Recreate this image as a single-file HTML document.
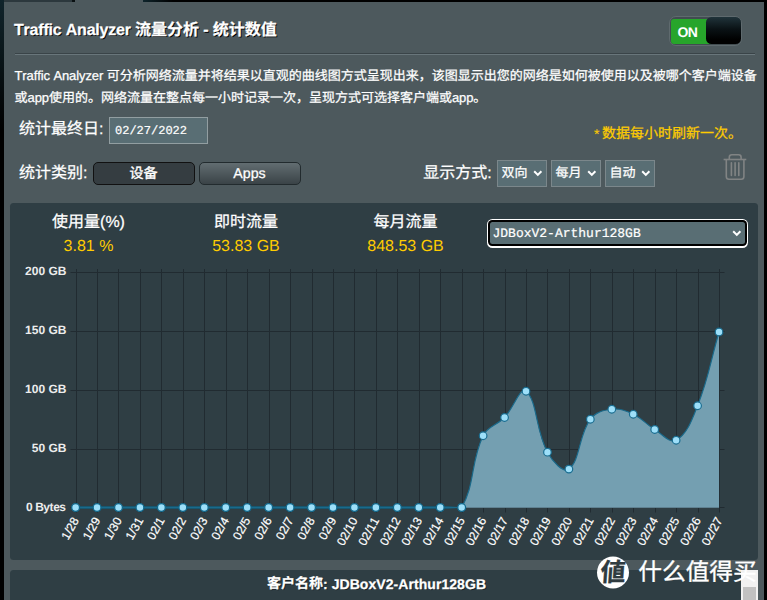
<!DOCTYPE html>
<html lang="zh-CN"><head><meta charset="utf-8"><title>Traffic Analyzer</title>
<style>
html,body,p,header,section{margin:0;padding:0}
html{width:767px;height:600px;overflow:hidden}
body{width:767px;height:600px;overflow:hidden;position:relative;background:#4d595d;font-family:"Liberation Sans",sans-serif;font-kerning:none;text-rendering:geometricPrecision}
.b{position:absolute;display:block}
.t{position:absolute;white-space:pre;}
.c{position:absolute;white-space:nowrap;color:#fff;height:1.2em;line-height:1.2em;z-index:2;font-family:"Liberation Sans","Noto Sans CJK SC",sans-serif;-webkit-text-stroke:0.25px #fff}
svg text{font-family:"Liberation Sans",sans-serif}
#ov,#ch{position:absolute;left:0;top:0;pointer-events:none}
</style></head><body>
<div class="frame">
<div class="b" style="left:0px;top:0px;width:4px;height:600px;background:linear-gradient(#10242b,#0a171b 50px,#000 130px)"></div>
<div class="b" style="left:764px;top:0px;width:3px;height:600px;background:#000"></div>
<div class="b" style="left:4px;top:0px;width:68px;height:1.5px;background:#2c383d"></div>
<div class="b" style="left:72px;top:0px;width:3px;height:1.5px;background:#0a1012"></div>
<div class="b" style="left:143px;top:0px;width:624px;height:1.8px;background:linear-gradient(90deg,#0e242b,#000 30px)"></div>
</div>
<header class="formfonttitle">
<span class="t" style="left:14px;top:21.82px;font-size:16px;line-height:18.38px;color:#fff;font-family:'Liberation Sans',sans-serif;font-weight:bold;letter-spacing:-0.2px;text-shadow:1px 1px 0 #000;-webkit-text-stroke:0.25px #fff;">Traffic Analyzer </span>
<span class="c" style="left:135.08px;top:20.86px;font-size:16px;width:66px;font-weight:bold;text-shadow:1px 1px 0 #000">流量分析</span>
<span class="t" style="left:199.08px;top:21.82px;font-size:16px;line-height:18.38px;color:#fff;font-family:'Liberation Sans',sans-serif;font-weight:bold;letter-spacing:-0.2px;text-shadow:1px 1px 0 #000;-webkit-text-stroke:0.25px #fff;"> - </span>
<span class="c" style="left:212.7px;top:20.86px;font-size:16px;width:66px;font-weight:bold;text-shadow:1px 1px 0 #000">统计数值</span>
<div class="b" style="left:15px;top:53px;width:740px;height:1px;background:#3a4448"></div>
<div class="b" style="left:15px;top:54px;width:740px;height:1px;background:#69767b"></div>
</header>
<p class="formfontdesc">
<span class="t" style="left:14.5px;top:68.53px;font-size:13px;line-height:14.94px;color:#fff;font-family:'Liberation Sans',sans-serif;letter-spacing:-0.1px;-webkit-text-stroke:0.25px #fff;">Traffic Analyzer </span>
<span class="c" style="left:106.71px;top:67.7px;font-size:13px;width:652px">可分析网络流量并将结果以直观的曲线图方式呈现出来，该图显示出您的网络是如何被使用以及被哪个客户端设备</span>
<span class="c" style="left:14.5px;top:89.7px;font-size:13px;width:15px">或</span>
<span class="t" style="left:27.5px;top:90.53px;font-size:13px;line-height:14.94px;color:#fff;font-family:'Liberation Sans',sans-serif;letter-spacing:-0.1px;-webkit-text-stroke:0.25px #fff;">app</span>
<span class="c" style="left:48.89px;top:89.7px;font-size:13px;width:405px">使用的。网络流量在整点每一小时记录一次，呈现方式可选择客户端或</span>
<span class="t" style="left:451.89px;top:90.53px;font-size:13px;line-height:14.94px;color:#fff;font-family:'Liberation Sans',sans-serif;letter-spacing:-0.1px;-webkit-text-stroke:0.25px #fff;">app</span>
<span class="c" style="left:473.28px;top:89.7px;font-size:13px;width:15px">。</span>
</p>
<div class="row-date">
<span class="c" style="left:19px;top:119.86px;font-size:16px;width:82px">统计最终日</span>
<span class="t" style="left:99px;top:120.82px;font-size:16px;line-height:18.38px;color:#fff;font-family:'Liberation Sans',sans-serif;-webkit-text-stroke:0.25px #fff;">:</span>
<div class="b" style="left:109px;top:116.5px;width:99px;height:27px;box-sizing:border-box;border:1px solid #929ea1;background:#596e74"></div>
<span class="t" style="left:115px;top:124.68px;font-size:12px;line-height:13.79px;color:#fff;font-family:'Liberation Mono',monospace;-webkit-text-stroke:0.2px #fff;">02/27/2022</span>
<span class="t" style="left:594px;top:125.93px;font-size:14px;line-height:16.09px;color:#ffcc00;font-family:'Liberation Sans',sans-serif;-webkit-text-stroke:0.1px #ffcc00;">*</span>
<span class="c" style="left:602.1px;top:124.75px;font-size:14px;width:142px;color:#ffcc00;-webkit-text-stroke:0.25px #ffcc00">数据每小时刷新一次。</span>
</div>
<div class="row-filter">
<span class="c" style="left:19px;top:164.16px;font-size:16px;width:66px">统计类别</span>
<span class="t" style="left:83px;top:165.12px;font-size:16px;line-height:18.38px;color:#fff;font-family:'Liberation Sans',sans-serif;-webkit-text-stroke:0.25px #fff;">:</span>
<div class="b" style="left:93px;top:162px;width:101.5px;height:22.5px;box-sizing:border-box;border:1px solid #111;border-radius:5px;background:#353d41"></div>
<span class="c" style="left:129.5px;top:165.05px;font-size:14px;width:30px;-webkit-text-stroke:0.4px #fff">设备</span>
<div class="b" style="left:199px;top:162px;width:101.5px;height:22.5px;box-sizing:border-box;border:1px solid #222b2e;border-radius:5px;background:linear-gradient(#626d71,#3a4347)"></div>
<span class="t" style="left:233.32px;top:165.7px;font-size:14.2px;line-height:16.32px;color:#fff;font-family:'Liberation Sans',sans-serif;-webkit-text-stroke:0.25px #fff;">Apps</span>
<span class="c" style="left:423.25px;top:164.16px;font-size:16px;width:66px">显示方式</span>
<span class="t" style="left:487.25px;top:165.12px;font-size:16px;line-height:18.38px;color:#fff;font-family:'Liberation Sans',sans-serif;-webkit-text-stroke:0.25px #fff;">:</span>
<div class="b" style="left:497px;top:160px;width:49.75px;height:26.75px;box-sizing:border-box;border:1px solid #7b878b;background:#596e74"></div>
<span class="c" style="left:501.5px;top:164.9px;font-size:13px;width:28px">双向</span>
<svg class="b" style="left:532.5px;top:170px" width="10" height="7" viewBox="0 0 10 7"><path d="M1.2 1.2 L4.8 4.9 L8.4 1.2" fill="none" stroke="#fff" stroke-width="2"/></svg>
<div class="b" style="left:551px;top:160px;width:49.75px;height:26.75px;box-sizing:border-box;border:1px solid #7b878b;background:#596e74"></div>
<span class="c" style="left:555.5px;top:164.9px;font-size:13px;width:28px">每月</span>
<svg class="b" style="left:586.5px;top:170px" width="10" height="7" viewBox="0 0 10 7"><path d="M1.2 1.2 L4.8 4.9 L8.4 1.2" fill="none" stroke="#fff" stroke-width="2"/></svg>
<div class="b" style="left:605px;top:160px;width:49.75px;height:26.75px;box-sizing:border-box;border:1px solid #7b878b;background:#596e74"></div>
<span class="c" style="left:609.5px;top:164.9px;font-size:13px;width:28px">自动</span>
<svg class="b" style="left:640.5px;top:170px" width="10" height="7" viewBox="0 0 10 7"><path d="M1.2 1.2 L4.8 4.9 L8.4 1.2" fill="none" stroke="#fff" stroke-width="2"/></svg>
<svg class="b" style="left:716px;top:148px" width="40" height="38" viewBox="716 148 40 38"><g fill="none" stroke="#818484" stroke-width="1.6"><path d="M723.6 159.5 H746.3"/><path d="M729.3 159.5 V157.2 Q729.3 154.7 731.8 154.7 H738.6 Q741.1 154.7 741.1 157.2 V159.5"/><path d="M726.3 159.5 V176.5 Q726.3 179.2 729 179.2 H741.2 Q743.9 179.2 743.9 176.5 V159.5"/><path stroke-linecap="round" d="M731.4 162.8 V175.4 M735.1 162.8 V175.4 M738.8 162.8 V175.4"/></g></svg>
</div>
<div class="iphone-switch">
<div class="b" style="left:669px;top:15.5px;width:72.5px;height:30.5px;box-sizing:border-box;border:1px solid #5f6a6e;border-radius:7px;background:#414c50"></div>
<div class="b" style="left:671px;top:18.5px;width:40px;height:25.75px;border-radius:3px 0 0 3px;background:#27a52b"></div>
<div class="b" style="left:706px;top:16.5px;width:34.6px;height:27.2px;border-radius:5.5px;background:linear-gradient(#20333a,#0a1215 45%,#000 85%)"></div>
<span class="t" style="left:677.6px;top:24.23px;font-size:14px;line-height:16.09px;color:#fff;font-family:'Liberation Sans',sans-serif;font-weight:bold;letter-spacing:-0.7px;">ON</span>
</div>
<section class="chart-panel">
<div class="b" style="left:10px;top:203px;width:747.5px;height:356.5px;border-radius:3.5px;background:#2f3e44"></div>
<div class="b" style="left:10px;top:570px;width:747.5px;height:30px;border-radius:3.5px 3.5px 0 0;background:#2f3e44"></div>
<span class="c" style="left:52.06px;top:212.56px;font-size:16px;width:50px">使用量</span>
<span class="t" style="left:100.06px;top:213.52px;font-size:16px;line-height:18.38px;color:#fff;font-family:'Liberation Sans',sans-serif;-webkit-text-stroke:0.25px #fff;">(%)</span>
<span class="t" style="left:63.59px;top:237.82px;font-size:16px;line-height:18.38px;color:#ffcc00;font-family:'Liberation Sans',sans-serif;">3.81 %</span>
<span class="c" style="left:214px;top:212.56px;font-size:16px;width:66px">即时流量</span>
<span class="t" style="left:212.2px;top:237.82px;font-size:16px;line-height:18.38px;color:#ffcc00;font-family:'Liberation Sans',sans-serif;">53.83 GB</span>
<span class="c" style="left:373.5px;top:212.56px;font-size:16px;width:66px">每月流量</span>
<span class="t" style="left:367.25px;top:237.82px;font-size:16px;line-height:18.38px;color:#ffcc00;font-family:'Liberation Sans',sans-serif;">848.53 GB</span>
<div class="b" style="left:486.75px;top:219px;width:261.25px;height:28.5px;border-radius:5.5px;background:#fff"></div>
<div class="b" style="left:488px;top:220.25px;width:258.75px;height:26px;border-radius:4.2px;background:#000"></div>
<div class="b" style="left:489.9px;top:222.1px;width:255px;height:22.3px;border-radius:2.5px;background:#596e74"></div>
<span class="t" style="left:492.5px;top:227.45px;font-size:13px;line-height:14.94px;color:#fff;font-family:'Liberation Mono',monospace;-webkit-text-stroke:0.2px #fff;">JDBoxV2-Arthur128GB</span>
<svg class="b" style="left:731.5px;top:229.6px" width="10" height="7" viewBox="0 0 10 7"><path d="M1.2 1.2 L4.8 4.9 L8.4 1.2" fill="none" stroke="#fff" stroke-width="2"/></svg>
</section>
<section class="client-panel">
<span class="c" style="left:267px;top:574.75px;font-size:14px;width:58px;font-weight:bold;text-shadow:1px 1px 0 #1a2226">客户名称</span>
<span class="t" style="left:323px;top:575.63px;font-size:14px;line-height:16.09px;color:#fff;font-family:'Liberation Sans',sans-serif;font-weight:bold;letter-spacing:0.06px;text-shadow:1px 1px 0 #1a2226;-webkit-text-stroke:0.25px #fff;">: JDBoxV2-Arthur128GB</span>
</section>
<div class="b" style="left:741px;top:570px;width:17px;height:30px;background:#f1f1f1"></div>
<div class="b" style="left:743px;top:587px;width:13px;height:13px;background:#c1c1c1"></div>
<span class="c" style="left:599.6px;top:558.14px;font-size:25px;width:27px;color:#2f3b40;font-weight:bold;font-family:'Liberation Sans','Noto Sans CJK JP',sans-serif;-webkit-text-stroke:0.3px #2f3b40;transform:skewX(-4deg);transform-origin:0 23.66px">値</span>
<span class="c" style="left:638.3px;top:559.27px;font-size:23.7px;width:120.5px;-webkit-text-stroke:0.35px #fff">什么值得买</span>
<svg id="ch" width="767" height="600" viewBox="0 0 767 600">
<path d="M76.5 269 V512.5 M97.5 269 V512.5 M118.5 269 V512.5 M140.5 269 V512.5 M161.5 269 V512.5 M183.5 269 V512.5 M204.5 269 V512.5 M226.5 269 V512.5 M247.5 269 V512.5 M269.5 269 V512.5 M290.5 269 V512.5 M312.5 269 V512.5 M333.5 269 V512.5 M354.5 269 V512.5 M376.5 269 V512.5 M397.5 269 V512.5 M419.5 269 V512.5 M440.5 269 V512.5 M462.5 269 V512.5 M483.5 269 V512.5 M505.5 269 V512.5 M526.5 269 V512.5 M547.5 269 V512.5 M569.5 269 V512.5 M590.5 269 V512.5 M612.5 269 V512.5 M633.5 269 V512.5 M655.5 269 V512.5 M676.5 269 V512.5 M698.5 269 V512.5 M719.5 269 V512.5 M70.5 272.5 H724.5 M70.5 331.5 H724.5 M70.5 390.5 H724.5 M70.5 449.5 H724.5 M70.5 507.5 H724.5" stroke="#212b31" stroke-width="1" fill="none"/>
<path d="M75.6 507.5 C84.18 507.5 88.47 507.5 97.05 507.5 C105.63 507.5 109.92 507.5 118.5 507.5 C127.08 507.5 131.36 507.5 139.94 507.5 C148.52 507.5 152.81 507.5 161.39 507.5 C169.97 507.5 174.26 507.5 182.84 507.5 C191.42 507.5 195.71 507.5 204.29 507.5 C212.87 507.5 217.16 507.5 225.74 507.5 C234.32 507.5 238.6 507.5 247.18 507.5 C255.76 507.5 260.05 507.5 268.63 507.5 C277.21 507.5 281.5 507.5 290.08 507.5 C298.66 507.5 302.95 507.5 311.53 507.5 C320.11 507.5 324.4 507.5 332.98 507.5 C341.56 507.5 345.84 507.5 354.42 507.5 C363 507.5 367.29 507.5 375.87 507.5 C384.45 507.5 388.74 507.5 397.32 507.5 C405.9 507.5 410.19 507.5 418.77 507.5 C427.35 507.5 431.64 507.5 440.22 507.5 C448.8 507.5 457.84 507.5 461.66 507.5 C475 485.19 470.64 461.91 483.11 435.75 C487.8 425.91 496.77 425.58 504.56 417.5 C513.93 407.78 520.1 386.47 526.01 391.25 C537.26 400.35 535.39 430.31 547.46 452.2 C552.55 461.45 563.16 473.51 568.9 469.1 C580.32 460.33 578.4 435.92 590.35 419.25 C595.56 411.98 602.91 410.29 611.8 409.25 C620.07 408.29 625.43 410.56 633.25 414.25 C642.59 418.66 645.72 424.06 654.7 429.5 C662.88 434.46 669.77 443.78 676.14 440.25 C686.93 434.28 691.66 420.73 697.59 405.75 C708.81 377.43 710.46 361.5 719.04 332 L719.04 507.8 L461.66 507.8 Z" fill="#749fb1"/>
<path d="M75.6 506.3 H448 L459 507 V508 L448 508.7 H75.6 Z" fill="#10607f"/>
<path d="M75.6 507.5 C84.18 507.5 88.47 507.5 97.05 507.5 C105.63 507.5 109.92 507.5 118.5 507.5 C127.08 507.5 131.36 507.5 139.94 507.5 C148.52 507.5 152.81 507.5 161.39 507.5 C169.97 507.5 174.26 507.5 182.84 507.5 C191.42 507.5 195.71 507.5 204.29 507.5 C212.87 507.5 217.16 507.5 225.74 507.5 C234.32 507.5 238.6 507.5 247.18 507.5 C255.76 507.5 260.05 507.5 268.63 507.5 C277.21 507.5 281.5 507.5 290.08 507.5 C298.66 507.5 302.95 507.5 311.53 507.5 C320.11 507.5 324.4 507.5 332.98 507.5 C341.56 507.5 345.84 507.5 354.42 507.5 C363 507.5 367.29 507.5 375.87 507.5 C384.45 507.5 388.74 507.5 397.32 507.5 C405.9 507.5 410.19 507.5 418.77 507.5 C427.35 507.5 431.64 507.5 440.22 507.5 C448.8 507.5 457.84 507.5 461.66 507.5 C475 485.19 470.64 461.91 483.11 435.75 C487.8 425.91 496.77 425.58 504.56 417.5 C513.93 407.78 520.1 386.47 526.01 391.25 C537.26 400.35 535.39 430.31 547.46 452.2 C552.55 461.45 563.16 473.51 568.9 469.1 C580.32 460.33 578.4 435.92 590.35 419.25 C595.56 411.98 602.91 410.29 611.8 409.25 C620.07 408.29 625.43 410.56 633.25 414.25 C642.59 418.66 645.72 424.06 654.7 429.5 C662.88 434.46 669.77 443.78 676.14 440.25 C686.93 434.28 691.66 420.73 697.59 405.75 C708.81 377.43 710.46 361.5 719.04 332" fill="none" stroke="#1a6a8b" stroke-width="1.15"/>
<circle cx="75.6" cy="507.5" r="3.9" fill="#9ddff9" stroke="#11678a" stroke-width="1.3"/>
<circle cx="97.05" cy="507.5" r="3.9" fill="#9ddff9" stroke="#11678a" stroke-width="1.3"/>
<circle cx="118.5" cy="507.5" r="3.9" fill="#9ddff9" stroke="#11678a" stroke-width="1.3"/>
<circle cx="139.94" cy="507.5" r="3.9" fill="#9ddff9" stroke="#11678a" stroke-width="1.3"/>
<circle cx="161.39" cy="507.5" r="3.9" fill="#9ddff9" stroke="#11678a" stroke-width="1.3"/>
<circle cx="182.84" cy="507.5" r="3.9" fill="#9ddff9" stroke="#11678a" stroke-width="1.3"/>
<circle cx="204.29" cy="507.5" r="3.9" fill="#9ddff9" stroke="#11678a" stroke-width="1.3"/>
<circle cx="225.74" cy="507.5" r="3.9" fill="#9ddff9" stroke="#11678a" stroke-width="1.3"/>
<circle cx="247.18" cy="507.5" r="3.9" fill="#9ddff9" stroke="#11678a" stroke-width="1.3"/>
<circle cx="268.63" cy="507.5" r="3.9" fill="#9ddff9" stroke="#11678a" stroke-width="1.3"/>
<circle cx="290.08" cy="507.5" r="3.9" fill="#9ddff9" stroke="#11678a" stroke-width="1.3"/>
<circle cx="311.53" cy="507.5" r="3.9" fill="#9ddff9" stroke="#11678a" stroke-width="1.3"/>
<circle cx="332.98" cy="507.5" r="3.9" fill="#9ddff9" stroke="#11678a" stroke-width="1.3"/>
<circle cx="354.42" cy="507.5" r="3.9" fill="#9ddff9" stroke="#11678a" stroke-width="1.3"/>
<circle cx="375.87" cy="507.5" r="3.9" fill="#9ddff9" stroke="#11678a" stroke-width="1.3"/>
<circle cx="397.32" cy="507.5" r="3.9" fill="#9ddff9" stroke="#11678a" stroke-width="1.3"/>
<circle cx="418.77" cy="507.5" r="3.9" fill="#9ddff9" stroke="#11678a" stroke-width="1.3"/>
<circle cx="440.22" cy="507.5" r="3.9" fill="#9ddff9" stroke="#11678a" stroke-width="1.3"/>
<circle cx="461.66" cy="507.5" r="3.9" fill="#9ddff9" stroke="#11678a" stroke-width="1.3"/>
<circle cx="483.11" cy="435.75" r="3.8" fill="#9ddff9" stroke="#1a6d90" stroke-width="1.2"/>
<circle cx="504.56" cy="417.5" r="3.8" fill="#9ddff9" stroke="#1a6d90" stroke-width="1.2"/>
<circle cx="526.01" cy="391.25" r="3.8" fill="#9ddff9" stroke="#1a6d90" stroke-width="1.2"/>
<circle cx="547.46" cy="452.2" r="3.8" fill="#9ddff9" stroke="#1a6d90" stroke-width="1.2"/>
<circle cx="568.9" cy="469.1" r="3.8" fill="#9ddff9" stroke="#1a6d90" stroke-width="1.2"/>
<circle cx="590.35" cy="419.25" r="3.8" fill="#9ddff9" stroke="#1a6d90" stroke-width="1.2"/>
<circle cx="611.8" cy="409.25" r="3.8" fill="#9ddff9" stroke="#1a6d90" stroke-width="1.2"/>
<circle cx="633.25" cy="414.25" r="3.8" fill="#9ddff9" stroke="#1a6d90" stroke-width="1.2"/>
<circle cx="654.7" cy="429.5" r="3.8" fill="#9ddff9" stroke="#1a6d90" stroke-width="1.2"/>
<circle cx="676.14" cy="440.25" r="3.8" fill="#9ddff9" stroke="#1a6d90" stroke-width="1.2"/>
<circle cx="697.59" cy="405.75" r="3.8" fill="#9ddff9" stroke="#1a6d90" stroke-width="1.2"/>
<circle cx="719.04" cy="332" r="3.8" fill="#9ddff9" stroke="#1a6d90" stroke-width="1.2"/>
<text x="66.4" y="274.8" text-anchor="end" font-weight="bold" font-size="12" fill="#ececec">200 GB</text>
<text x="66.4" y="333.8" text-anchor="end" font-weight="bold" font-size="12" fill="#ececec">150 GB</text>
<text x="66.4" y="392.8" text-anchor="end" font-weight="bold" font-size="12" fill="#ececec">100 GB</text>
<text x="66.4" y="451.7" text-anchor="end" font-weight="bold" font-size="12" fill="#ececec">50 GB</text>
<text x="65.6" y="511.2" text-anchor="end" font-weight="bold" font-size="12" fill="#ececec" letter-spacing="-0.45">0 Bytes</text>
<text transform="translate(75.6 518.2) rotate(-61)" text-anchor="end" y="4.2" font-size="12" fill="#fff" stroke="#fff" stroke-width="0.2">1/28</text>
<text transform="translate(97.05 518.2) rotate(-61)" text-anchor="end" y="4.2" font-size="12" fill="#fff" stroke="#fff" stroke-width="0.2">1/29</text>
<text transform="translate(118.5 518.2) rotate(-61)" text-anchor="end" y="4.2" font-size="12" fill="#fff" stroke="#fff" stroke-width="0.2">1/30</text>
<text transform="translate(139.94 518.2) rotate(-61)" text-anchor="end" y="4.2" font-size="12" fill="#fff" stroke="#fff" stroke-width="0.2">1/31</text>
<text transform="translate(161.39 518.2) rotate(-61)" text-anchor="end" y="4.2" font-size="12" fill="#fff" stroke="#fff" stroke-width="0.2">02/1</text>
<text transform="translate(182.84 518.2) rotate(-61)" text-anchor="end" y="4.2" font-size="12" fill="#fff" stroke="#fff" stroke-width="0.2">02/2</text>
<text transform="translate(204.29 518.2) rotate(-61)" text-anchor="end" y="4.2" font-size="12" fill="#fff" stroke="#fff" stroke-width="0.2">02/3</text>
<text transform="translate(225.74 518.2) rotate(-61)" text-anchor="end" y="4.2" font-size="12" fill="#fff" stroke="#fff" stroke-width="0.2">02/4</text>
<text transform="translate(247.18 518.2) rotate(-61)" text-anchor="end" y="4.2" font-size="12" fill="#fff" stroke="#fff" stroke-width="0.2">02/5</text>
<text transform="translate(268.63 518.2) rotate(-61)" text-anchor="end" y="4.2" font-size="12" fill="#fff" stroke="#fff" stroke-width="0.2">02/6</text>
<text transform="translate(290.08 518.2) rotate(-61)" text-anchor="end" y="4.2" font-size="12" fill="#fff" stroke="#fff" stroke-width="0.2">02/7</text>
<text transform="translate(311.53 518.2) rotate(-61)" text-anchor="end" y="4.2" font-size="12" fill="#fff" stroke="#fff" stroke-width="0.2">02/8</text>
<text transform="translate(332.98 518.2) rotate(-61)" text-anchor="end" y="4.2" font-size="12" fill="#fff" stroke="#fff" stroke-width="0.2">02/9</text>
<text transform="translate(354.42 518.2) rotate(-61)" text-anchor="end" y="4.2" font-size="12" fill="#fff" stroke="#fff" stroke-width="0.2">02/10</text>
<text transform="translate(375.87 518.2) rotate(-61)" text-anchor="end" y="4.2" font-size="12" fill="#fff" stroke="#fff" stroke-width="0.2">02/11</text>
<text transform="translate(397.32 518.2) rotate(-61)" text-anchor="end" y="4.2" font-size="12" fill="#fff" stroke="#fff" stroke-width="0.2">02/12</text>
<text transform="translate(418.77 518.2) rotate(-61)" text-anchor="end" y="4.2" font-size="12" fill="#fff" stroke="#fff" stroke-width="0.2">02/13</text>
<text transform="translate(440.22 518.2) rotate(-61)" text-anchor="end" y="4.2" font-size="12" fill="#fff" stroke="#fff" stroke-width="0.2">02/14</text>
<text transform="translate(461.66 518.2) rotate(-61)" text-anchor="end" y="4.2" font-size="12" fill="#fff" stroke="#fff" stroke-width="0.2">02/15</text>
<text transform="translate(483.11 518.2) rotate(-61)" text-anchor="end" y="4.2" font-size="12" fill="#fff" stroke="#fff" stroke-width="0.2">02/16</text>
<text transform="translate(504.56 518.2) rotate(-61)" text-anchor="end" y="4.2" font-size="12" fill="#fff" stroke="#fff" stroke-width="0.2">02/17</text>
<text transform="translate(526.01 518.2) rotate(-61)" text-anchor="end" y="4.2" font-size="12" fill="#fff" stroke="#fff" stroke-width="0.2">02/18</text>
<text transform="translate(547.46 518.2) rotate(-61)" text-anchor="end" y="4.2" font-size="12" fill="#fff" stroke="#fff" stroke-width="0.2">02/19</text>
<text transform="translate(568.9 518.2) rotate(-61)" text-anchor="end" y="4.2" font-size="12" fill="#fff" stroke="#fff" stroke-width="0.2">02/20</text>
<text transform="translate(590.35 518.2) rotate(-61)" text-anchor="end" y="4.2" font-size="12" fill="#fff" stroke="#fff" stroke-width="0.2">02/21</text>
<text transform="translate(611.8 518.2) rotate(-61)" text-anchor="end" y="4.2" font-size="12" fill="#fff" stroke="#fff" stroke-width="0.2">02/22</text>
<text transform="translate(633.25 518.2) rotate(-61)" text-anchor="end" y="4.2" font-size="12" fill="#fff" stroke="#fff" stroke-width="0.2">02/23</text>
<text transform="translate(654.7 518.2) rotate(-61)" text-anchor="end" y="4.2" font-size="12" fill="#fff" stroke="#fff" stroke-width="0.2">02/24</text>
<text transform="translate(676.14 518.2) rotate(-61)" text-anchor="end" y="4.2" font-size="12" fill="#fff" stroke="#fff" stroke-width="0.2">02/25</text>
<text transform="translate(697.59 518.2) rotate(-61)" text-anchor="end" y="4.2" font-size="12" fill="#fff" stroke="#fff" stroke-width="0.2">02/26</text>
<text transform="translate(719.04 518.2) rotate(-61)" text-anchor="end" y="4.2" font-size="12" fill="#fff" stroke="#fff" stroke-width="0.2">02/27</text>
</svg>
<svg id="ov" width="767" height="600" viewBox="0 0 767 600">
<circle cx="613" cy="572.5" r="16" fill="#fff"/>
</svg>
</body></html>
